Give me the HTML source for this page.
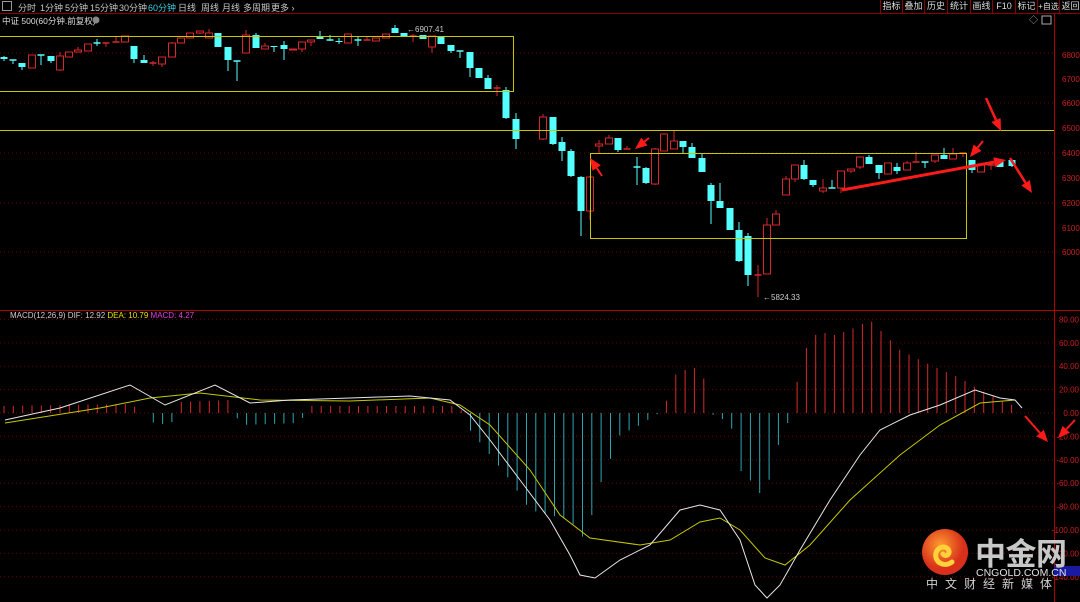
<!DOCTYPE html>
<html><head><meta charset="utf-8"><style>
html,body{margin:0;padding:0;background:#000;width:1080px;height:602px;overflow:hidden;font-family:"Liberation Sans","Noto Sans CJK SC",sans-serif}
#bar{position:absolute;left:0;top:0;width:1080px;height:13px;border-bottom:1px solid #8a0000;font-size:9px;color:#c8c8c8;white-space:nowrap}
#bar span{position:absolute;top:1px}
.rb{position:absolute;top:0;height:13px;border-left:1px solid #8a0000;font-size:9px;line-height:13px;text-align:center;color:#ddd;white-space:nowrap;overflow:hidden}
svg{position:absolute;left:0;top:0}
</style></head><body>
<svg id="s" width="1080" height="602" xmlns="http://www.w3.org/2000/svg"></svg>
<div id="bar">
<span style="left:2px;top:1px;width:8px;height:8px;border:1px solid #999"></span>
<span style="left:18px">分时</span><span style="left:40px">1分钟</span><span style="left:65px">5分钟</span><span style="left:90px">15分钟</span><span style="left:119px">30分钟</span><span style="left:148px;color:#3fd0e0">60分钟</span><span style="left:178px">日线</span><span style="left:201px">周线</span><span style="left:222px">月线</span><span style="left:243px">多周期</span><span style="left:271px">更多 ›</span>
<div class="rb" style="left:880px;width:21px">指标</div><div class="rb" style="left:902px;width:21px">叠加</div><div class="rb" style="left:924px;width:22px">历史</div><div class="rb" style="left:947px;width:22px">统计</div><div class="rb" style="left:970px;width:21px">画线</div><div class="rb" style="left:992px;width:22px">F10</div><div class="rb" style="left:1015px;width:21px">标记</div><div class="rb" style="left:1037px;width:21px;font-size:8px">+自选</div><div class="rb" style="left:1059px;width:21px;border-right:none">返回</div>
</div>
<script>
const S=document.getElementById('s');let h='';
const R='#d8282a',C='#54ffff',Y='#c8c800';
[53,103,153,203,252].forEach(y=>h+=`<line x1="0" y1="${y}" x2="1054" y2="${y}" stroke="#6a0000" stroke-dasharray="1,3"/>`);
for(let v=80;v>=-140;v-=20){let y=413-v*1.17;h+=`<line x1="0" y1="${y}" x2="1054" y2="${y}" stroke="#6a0000" stroke-dasharray="1,3"/>`;
h+=`<text x="1079" y="${y+3}" fill="#c82020" font-size="8" text-anchor="end">${v.toFixed(2)}</text>`;}
[[6800,55],[6700,79],[6600,103],[6500,128],[6400,153],[6300,178],[6200,203],[6100,228],[6000,252]].forEach(a=>h+=`<text x="1062" y="${a[1]+3}" fill="#c82020" font-size="8">${a[0]}</text>`);
h+=`<line x1="1054.5" y1="14" x2="1054.5" y2="602" stroke="#b00000"/><line x1="0" y1="310.5" x2="1080" y2="310.5" stroke="#b00000"/>`;
h+=`<rect x="1054" y="566" width="26" height="10" fill="#1a1aa0"/>`;
const K=[[4,'c',57,59,56,61],[13,'c',60,60,60,64],[22,'c',63,67,63,70],[32,'r',55,68,55,68],[41,'c',55,55,55,65],[51,'c',56,61,56,63],[60,'r',56,70,52,71],[69,'r',52,57,52,57],[78,'r',50,52,47,52],[88,'r',44,51,44,51],[97,'c',43,43,39,46],[106,'r',43,43,43,47],[116,'r',42,42,37,42],[125,'r',36,42,36,42],[134,'c',46,59,46,63],[144,'c',60,63,55,63],[153,'r',63,63,61,66],[162,'r',57,64,57,67],[172,'r',43,57,42,57],[181,'r',38,43,38,43],[190,'r',33,38,33,38],[200,'r',31,33,31,34],[209,'r',33,38,29,38],[218,'c',33,47,33,47],[228,'c',47,60,47,71],[237,'c',61,61,61,81],[246,'r',35,53,30,53],[256,'c',35,48,33,48],[265,'r',46,49,43,49],[274,'c',46,47,46,52],[284,'c',45,49,41,60],[293,'r',49,50,49,50],[302,'r',42,49,42,52],[311,'r',40,42,40,46],[320,'c',36,39,31,39],[330,'c',40,40,35,41],[339,'c',41,42,38,44],[348,'r',34,43,34,43],[358,'c',40,40,37,46],[367,'r',40,40,37,40],[376,'r',38,41,38,41],[386,'r',34,38,34,38],[395,'c',28,33,25,33],[404,'c',33,36,33,37],[413,'r',36,36,34,42],[423,'c',35,39,35,39],[432,'r',36,47,36,53],[441,'c',36,44,36,44],[451,'c',45,51,45,53],[460,'c',51,51,51,58],[470,'c',52,68,52,77],[479,'c',68,78,68,78],[488,'c',78,89,75,89],[497,'r',88,88,85,96],[506,'c',90,118,87,119],[516,'c',119,139,113,149],
[543,'r',117,139,114,140],[553,'c',117,144,117,145],[562,'c',142,151,137,161],[571,'c',151,176,149,177],[581,'c',177,211,176,236],[590,'r',177,211,176,220],[599,'r',144,146,140,154],[609,'r',138,144,135,144],[618,'c',138,150,138,152],[627,'r',149,149,146,149],[637,'c',167,167,157,185],[646,'c',168,183,167,184],[655,'r',149,184,148,185],[664,'r',134,151,133,151],[674,'r',141,149,131,149],[683,'c',141,147,141,153],[692,'c',147,158,143,158],[702,'c',158,172,154,172],[711,'c',185,201,183,224],[720,'c',201,208,183,208],[730,'c',208,230,208,230],[739,'c',230,261,222,262],[748,'c',236,275,233,286],[758,'r',275,275,265,297],[767,'r',225,274,218,274],[776,'r',214,225,210,225],[786,'r',179,195,176,195],[795,'r',165,179,165,182],[804,'c',165,179,160,180],[813,'c',180,185,180,187],[823,'r',188,191,179,193],[832,'c',188,188,180,188],[841,'r',171,188,171,193],[851,'r',169,171,169,173],[860,'r',157,167,157,169],[869,'c',157,164,155,164],[879,'c',165,173,165,179],[888,'r',163,174,163,174],[897,'c',167,171,163,174],[907,'r',163,170,161,170],[916,'r',162,162,152,162],[925,'c',162,162,162,168],[935,'r',155,161,155,163],[944,'c',155,159,148,159],[953,'r',154,159,148,159],[963,'r',153,153,153,157],[972,'c',160,170,160,173],[981,'r',164,172,164,172],[991,'r',165,165,162,170],[1000,'c',161,167,161,167],[1012,'c',160,166,159,167]];
K.forEach(k=>{let[x,t,a,b,w1,w2]=k,col=t=='r'?R:C;
h+=`<line x1="${x}" y1="${w1}" x2="${x}" y2="${w2}" stroke="${col}"/>`;
if(b-a<1)h+=`<line x1="${x-3.5}" y1="${a}" x2="${x+3.5}" y2="${a}" stroke="${col}" stroke-width="1.5"/>`;
else if(t=='r')h+=`<rect x="${x-3.5}" y="${a}" width="7" height="${b-a}" fill="#000" stroke="${R}"/>`;
else h+=`<rect x="${x-3.5}" y="${a}" width="7" height="${b-a}" fill="${C}"/>`;});
h+=`<polyline points="0,36.5 513.5,36.5 513.5,91.5 0,91.5" fill="none" stroke="${Y}"/><line x1="0" y1="130.5" x2="1054" y2="130.5" stroke="${Y}"/><rect x="590.5" y="153.5" width="376" height="85" fill="none" stroke="${Y}"/>`;
h+=`<text x="407" y="32" fill="#ccc" font-size="8">←6907.41</text><text x="763" y="300" fill="#ccc" font-size="8">←5824.33</text>`;
h+=`<text x="2" y="24" fill="#ddd" font-size="8.5">中证 500(60分钟.前复权)</text><circle cx="96" cy="20" r="3.5" fill="#888"/>`;
h+=`<text x="10" y="318" fill="#ccc" font-size="8">MACD(12,26,9)  DIF: 12.92  <tspan fill="#e0e000">DEA: 10.79</tspan>  <tspan fill="#e040e0">MACD: 4.27</tspan></text>`;
h+=`<text x="1029" y="23" fill="#aaa" font-size="9">◇</text><rect x="1042" y="16" width="9" height="8" fill="none" stroke="#aaa"/>`;
const HP=[[0,406],[130,404],[145,413],[150,422],[170,425],[178,413],[180,402],[230,400],[235,413],[240,425],[300,423],[305,413],[310,406],[455,406],[465,413],[470,430],[490,455],[510,480],[530,510],[550,515],[570,520],[585,540],[600,485],[620,435],[640,425],[655,415],[660,413],[665,405],[675,375],[685,370],[695,368],[705,380],[712,413],[715,418],[730,420],[740,470],[750,480],[765,500],[775,450],[785,435],[790,413],[795,390],[805,350],[815,335],[825,333],[835,335],[850,330],[870,320],[880,330],[900,350],[930,365],[960,378],[980,390],[1000,400],[1012,405]];
function hv(x){for(let i=1;i<HP.length;i++){if(x<=HP[i][0]){let[a,b]=HP[i-1],[c,d]=HP[i];return b+(d-b)*(x-a)/(c-a)}}return 410}
for(let x=4;x<=1012;x+=9.33){let y=hv(x);if(Math.abs(y-413)<1)continue;h+=`<line x1="${x.toFixed(1)}" y1="413" x2="${x.toFixed(1)}" y2="${y.toFixed(1)}" stroke="${y<413?R:'#2aa8b0'}"/>`;}
h+=`<polyline fill="none" stroke="#c8c800" points="5,423 100,408 150,398 200,393 260,400 350,401 430,398 460,405 490,425 530,470 560,515 590,538 640,545 670,540 700,522 720,518 740,530 765,558 785,565 810,545 850,500 900,455 940,425 980,403 1015,400"/>`;
h+=`<polyline fill="none" stroke="#e8e8e8" points="5,420 60,408 130,385 165,405 215,385 250,403 290,400 350,398 410,396 450,400 470,415 490,440 520,480 550,520 570,555 580,575 595,578 620,560 650,545 680,510 700,505 720,510 740,540 755,585 767,598 780,585 800,550 830,500 860,455 880,430 910,415 940,405 975,390 1000,398 1015,400 1022,408"/>`;
function ar(x1,y1,x2,y2,w){let a=Math.atan2(y2-y1,x2-x1),L=12,W=5;let bx=x2-L*Math.cos(a),by=y2-L*Math.sin(a),px=-Math.sin(a)*W,py=Math.cos(a)*W;
h+=`<line x1="${x1}" y1="${y1}" x2="${bx}" y2="${by}" stroke="#ff1a1a" stroke-width="${w}"/><polygon points="${x2},${y2} ${bx+px},${by+py} ${bx-px},${by-py}" fill="#ff1a1a"/>`;}
ar(842,190,1006,160,3);ar(986,98,1001,131,2.5);ar(1010,158,1032,193,2.5);ar(983,141,970,157,2);ar(602,176,590,158,2);ar(649,138,635,149,2);ar(1025,416,1048,442,2);ar(1075,420,1058,438,2);
h+=`<defs><radialGradient id="g" cx="40%" cy="35%"><stop offset="0" stop-color="#ff9a30"/><stop offset="1" stop-color="#d8301a"/></radialGradient></defs><circle cx="945" cy="552" r="23" fill="url(#g)"/><path d="M952 562c-8 6-18 0-16-9 2-7 11-8 13-2 1 4-4 6-6 3" fill="none" stroke="#ffd23a" stroke-width="5" stroke-linecap="round"/>`;
h+=`<text x="975" y="565" fill="#c8c8c8" font-size="31" font-weight="bold" textLength="92" font-family="Noto Sans CJK SC,sans-serif">中金网</text><text x="976" y="576" fill="#e0e0e0" font-size="10.5">CNGOLD.COM.CN</text><text x="926" y="588" fill="#d0d0d0" font-size="12" letter-spacing="7" font-family="Noto Sans CJK SC,sans-serif">中文财经新媒体</text>`;
S.innerHTML=h;
</script>
</body></html>
